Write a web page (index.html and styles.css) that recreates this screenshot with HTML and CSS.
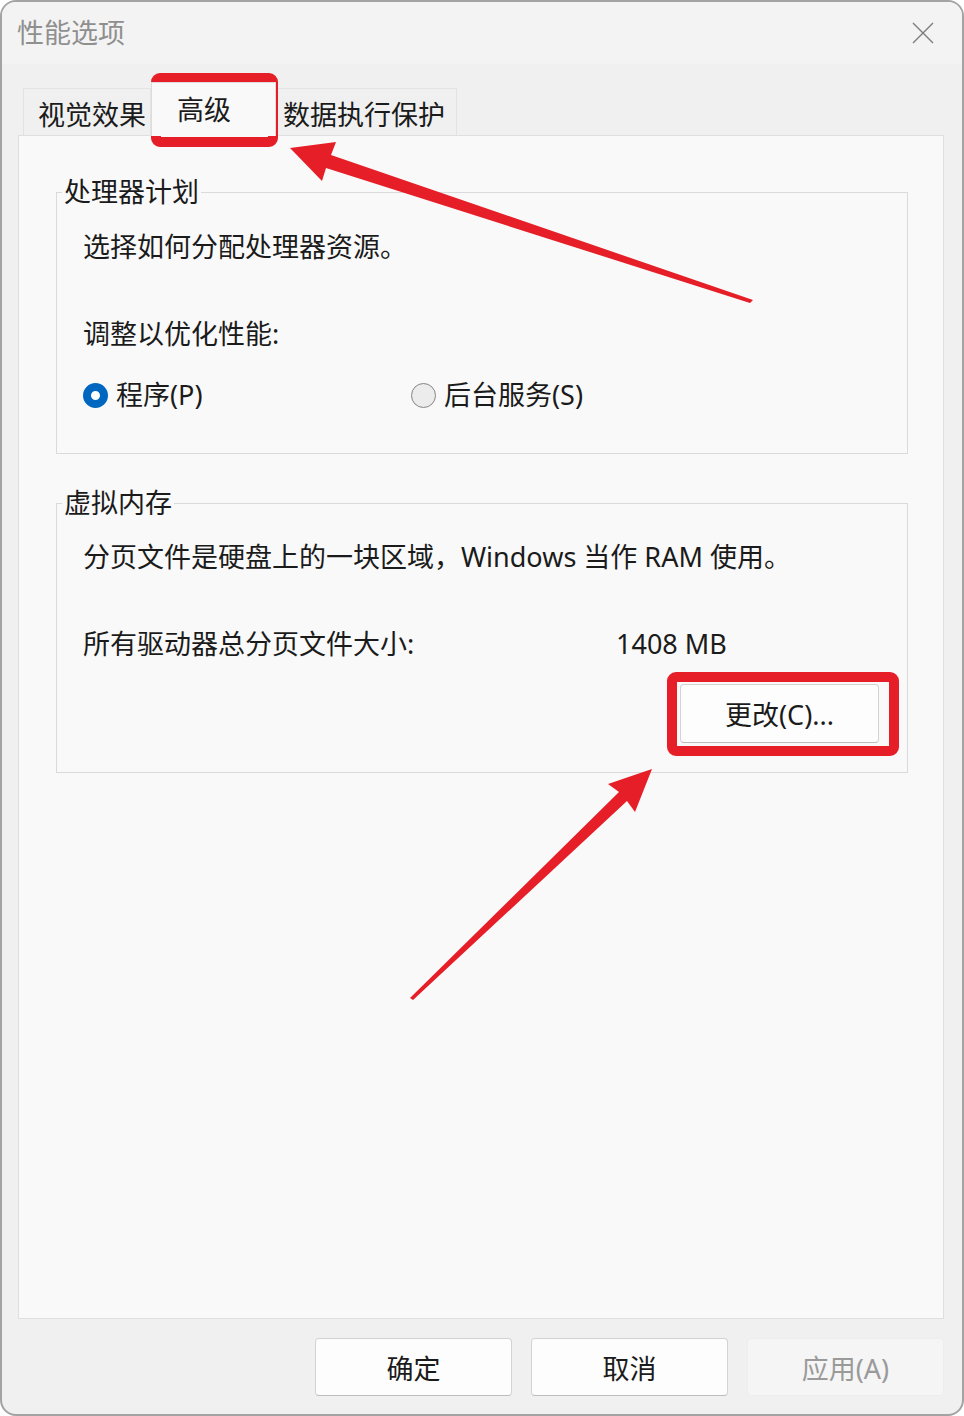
FILE: index.html
```html
<!DOCTYPE html>
<html lang="zh-CN">
<head>
<meta charset="utf-8">
<title>性能选项</title>
<link rel="stylesheet" href="styles.css">
</head>
<body>
<div class="window">
  <div class="titlebar">
    <span class="title">性能选项</span>
    <svg class="close" viewBox="0 0 22 22"><path d="M1 1 L21 21 M21 1 L1 21"/></svg>
  </div>
  <div class="main">
    <div class="tabs">
      <div class="tab tab-1">视觉效果</div>
      <div class="tab tab-active">高级</div>
      <div class="tab tab-3">数据执行保护</div>
    </div>
    <div class="panel">
      <fieldset class="group">
        <legend>处理器计划</legend>
        <div class="group-body">
          <p class="line">选择如何分配处理器资源。</p>
          <p class="line gap">调整以优化性能:</p>
          <div class="radios">
            <label class="radio radio-first"><span class="dot dot-on"></span>程序(P)</label>
            <label class="radio"><span class="dot"></span>后台服务(S)</label>
          </div>
        </div>
      </fieldset>
      <fieldset class="group group-vm">
        <legend>虚拟内存</legend>
        <div class="group-body">
          <p class="line">分页文件是硬盘上的一块区域，Windows 当作 RAM 使用。</p>
          <div class="line gap size-row">
            <span class="size-label">所有驱动器总分页文件大小:</span>
            <span class="size-value">1408 MB</span>
          </div>
          <div class="change-row">
            <button class="btn btn-change">更改(C)...</button>
          </div>
        </div>
      </fieldset>
    </div>
    <div class="actions">
      <button class="btn">确定</button>
      <button class="btn">取消</button>
      <button class="btn btn-disabled">应用(A)</button>
    </div>
  </div>
</div>
<svg class="annotations" viewBox="0 0 964 1416">
  <rect x="156" y="78" width="117" height="64" rx="4" class="mark"/>
  <rect x="672" y="677" width="222" height="74" rx="4" class="mark"/>
  <polygon class="arrow" points="290,148 336,142 331,155 753,300 750,303 326,168 322,181"/>
  <polygon class="arrow" points="652,769 608,784 619,792 410,998 413,1000 627,801 635,812"/>
</svg>
</body>
</html>
```
FILE: styles.css
```css
body {
  margin: 0;
  position: relative;
  background: #ffffff;
  font-family: "Noto Sans", "Noto Sans CJK SC", sans-serif;
}

.window {
  width: 964px;
  height: 1416px;
  box-sizing: border-box;
  border: 2px solid #a3a3a3;
  border-radius: 16px;
  background: #f0f0f0;
  display: flex;
  flex-direction: column;
  overflow: hidden;
  color: #1b1b1b;
  font-size: 27px;
}

.titlebar {
  height: 62px;
  flex: none;
  background: #f3f3f3;
  display: flex;
  align-items: center;
  justify-content: space-between;
  padding: 0 28px 0 15px;
}

.title {
  color: #8f8f8f;
  line-height: 30px;
}

.close {
  width: 22px;
  height: 22px;
  stroke: #7c7c7c;
  stroke-width: 1.4;
  fill: none;
}

.main {
  flex: 1;
  min-height: 0;
  display: flex;
  flex-direction: column;
  padding: 18px 18px 18px 16px;
}

.tabs {
  flex: none;
  height: 53px;
  display: flex;
  align-items: flex-end;
  padding-left: 5px;
}

.tab {
  box-sizing: border-box;
  height: 47px;
  padding-top: 6px;
  display: flex;
  align-items: center;
  border: 1px solid #e3e3e3;
  border-bottom: none;
  background: #f0f0f0;
  line-height: 30px;
  white-space: nowrap;
}

.tab-1 {
  width: 128px;
  padding-left: 14px;
}

.tab-active {
  width: 125px;
  height: 54px;
  padding-top: 0;
  padding-left: 25px;
  margin-bottom: -1px;
  background: #f9f9f9;
  border-color: #dcdcdc;
  position: relative;
  z-index: 1;
}

.tab-3 {
  width: 181px;
  padding-left: 6px;
}

.panel {
  flex: 1;
  border: 1px solid #dfdfdf;
  background: #f9f9f9;
  padding: 41px 35px 0 37px;
}

.group {
  margin: 0;
  padding: 0;
  min-width: 0;
  border: 1px solid #dadada;
}

.group legend {
  margin-left: 5px;
  padding: 0 2px;
  line-height: 30px;
}

.group-body {
  padding: 22px 28px 40px 26px;
}

.group-vm {
  margin-top: 34px;
}

.group-vm .group-body {
  padding-top: 21px;
  padding-bottom: 29px;
}

.line {
  margin: 0;
  line-height: 36px;
  white-space: nowrap;
}

.gap {
  margin-top: 51px;
}

.radios {
  margin-top: 25px;
  height: 36px;
  display: flex;
  align-items: center;
}

.radio {
  display: flex;
  align-items: center;
  gap: 8px;
  line-height: 36px;
}

.radio-first {
  width: 328px;
}

.dot {
  width: 25px;
  height: 25px;
  box-sizing: border-box;
  border-radius: 50%;
  border: 1px solid #858585;
  background: #ececec;
}

.dot-on {
  border: 8.5px solid #0067c0;
  background: #ffffff;
}

.size-row {
  display: flex;
}

.size-label {
  width: 533px;
}

.change-row {
  margin-top: 22px;
  display: flex;
  justify-content: flex-end;
}

.btn {
  width: 197px;
  height: 58px;
  box-sizing: border-box;
  border: 1px solid #d3d3d3;
  border-bottom-color: #bcbcbc;
  border-radius: 4px;
  background: #fdfdfd;
  font: inherit;
  color: #1b1b1b;
  padding: 0;
}

.btn-change {
  width: 199px;
  height: 59px;
}

.btn-disabled {
  background: #f5f5f5;
  border-color: #ededed;
  color: #9a9a9a;
}

.actions {
  flex: none;
  margin-top: 19px;
  display: flex;
  justify-content: flex-end;
  gap: 19px;
}

.annotations {
  position: absolute;
  top: 0;
  left: 0;
  width: 964px;
  height: 1416px;
  pointer-events: none;
}

.mark {
  fill: none;
  stroke: #e61e28;
  stroke-width: 10;
}

.arrow {
  fill: #e61e28;
}
```
